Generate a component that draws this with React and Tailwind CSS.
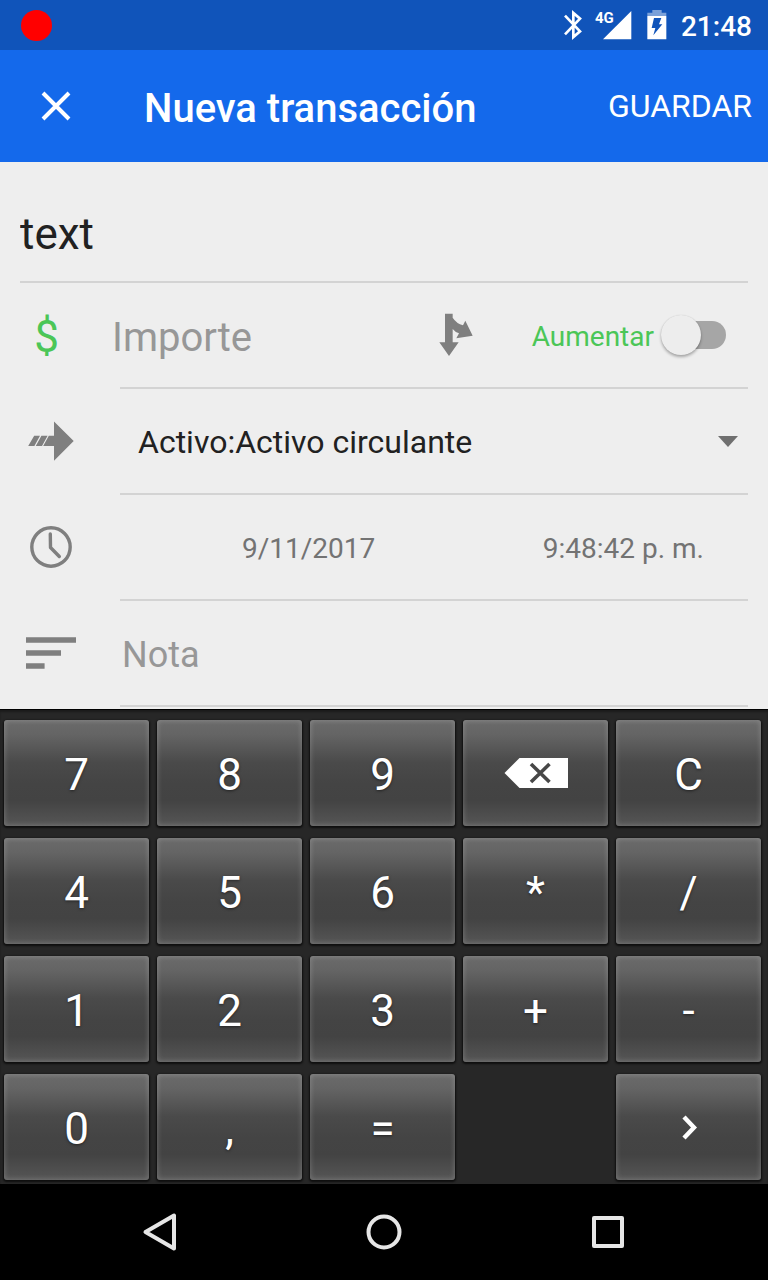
import React, { useState } from "react";

const keys = [
  "7", "8", "9", "backspace", "C",
  "4", "5", "6", "*", "/",
  "1", "2", "3", "+", "-",
  "0", ",", "=", null, "next",
];

function StatusBar() {
  return (
    <header className="flex h-[50px] items-center bg-[#1054ba] pl-[21px] pr-4 text-white">
      <span className="size-[31px] rounded-full bg-[#ff0000]" />
      <div className="ml-auto flex items-center">
        <svg className="h-8 w-5" viewBox="70 27 60 96" fill="none" stroke="white" strokeWidth="8" aria-hidden="true">
          <path d="M76 47 L121 94 L101 111 V39 L121 56 L76 103" />
        </svg>
        <div className="relative ml-3 h-8 w-[38px]">
          <svg className="h-8 w-[38px]" viewBox="165 27 114 96" fill="white" aria-hidden="true">
            <path d="M189 118 L274 33 V118 Z" />
          </svg>
          <span className="absolute left-0 top-0 text-[15px] font-bold leading-[18px]">4G</span>
        </div>
        <svg className="ml-3 h-8 w-6" viewBox="317 27 72 96" fill="white" aria-hidden="true">
          <path d="M339 30 H367 V38 H381 V48 H324 V38 H339 Z" opacity="0.45" />
          <path fillRule="evenodd" d="M324 48 H381 V118 H324 Z M344 54 H366 L359 73 H369 L342 106 L348 84 H337 Z" />
        </svg>
        <time className="ml-3 pt-1 text-[28px] font-medium leading-8">21:48</time>
      </div>
    </header>
  );
}

function Toolbar() {
  return (
    <div className="flex h-28 items-center bg-[#1469eb] pl-9 pr-4 text-white">
      <button type="button" aria-label="Cerrar">
        <svg className="size-10" viewBox="0 0 40 40" fill="none" stroke="white" strokeWidth="4" aria-hidden="true">
          <path d="M7 7 L33 33 M33 7 L7 33" />
        </svg>
      </button>
      <h1 className="ml-17 pt-1.5 text-[40px] font-medium leading-12">Nueva transacción</h1>
      <button type="button" className="ml-auto text-[32px] leading-10">GUARDAR</button>
    </div>
  );
}

function Row({ icon, children }) {
  return (
    <div>
      <div className="flex h-26 items-center">
        <div className="w-23 shrink-0">{icon}</div>
        {children}
      </div>
      <div className="ml-25 h-0.5 bg-[#d3d3d3]" />
    </div>
  );
}

function ArrowIcon() {
  return (
    <svg className="size-16" viewBox="0 0 64 64" fill="#7f7f7f" aria-hidden="true">
      <path d="M8.2 37 L14.2 26.7 H20 L14.4 37 Z M15.8 37 L21.4 26.7 H27.6 L22 37 Z M23.2 37 L28.8 26.7 H34 V12.5 L53.7 32 L34 51.7 V37 Z" />
    </svg>
  );
}

function ClockIcon() {
  return (
    <svg className="size-16" viewBox="0 0 64 64" fill="none" stroke="#7f7f7f" strokeWidth="3.4" aria-hidden="true">
      <circle cx="31" cy="32" r="19.2" />
      <path d="M30.3 19 L30.5 32.5 L39.3 41.5" strokeLinecap="round" strokeLinejoin="round" />
    </svg>
  );
}

function NoteIcon() {
  return (
    <svg className="size-16" viewBox="0 0 64 64" fill="#7f7f7f" aria-hidden="true">
      <path d="M6 16.3 H56 V21.7 H6 Z M6 29.3 H41 V34.7 H6 Z M6 42.3 H24.6 V47.7 H6 Z" />
    </svg>
  );
}

function SplitIcon() {
  return (
    <svg className="h-12 w-10" viewBox="0 0 120 144" fill="#7f7f7f" aria-hidden="true">
      <path d="M21 8 H44 V20 Q56 38 75 43 L82 29 L104 74 L55 82 L63 67 Q52 64 44 54 V94 H62 L33 135 L4 94 H21 Z" />
    </svg>
  );
}

function TransactionForm() {
  const [title, setTitle] = useState("text");
  return (
    <form className="bg-[#eeeeee] px-5 pb-0.5" onSubmit={(e) => e.preventDefault()}>
      <input
        aria-label="Descripción"
        className="block h-[121px] w-full border-b-2 border-[#d3d3d3] pt-6 text-[44px] text-[#212121] outline-none"
        value={title}
        onChange={(e) => setTitle(e.target.value)}
      />
      <Row icon={<span className="flex w-[53px] justify-center pt-1 text-[44px] leading-12 text-[#4bc657]">$</span>}>
        <input
          aria-label="Importe"
          placeholder="Importe"
          className="min-w-0 flex-1 pt-1.5 text-[40px] text-[#212121] outline-none placeholder:text-[#979797]"
        />
        <button type="button" aria-label="Dividir" className="mr-[54px]">
          <SplitIcon />
        </button>
        <label className="mr-[22px] flex items-center gap-4">
          <span className="pt-1 text-[28px] leading-8 text-[#4bc657]">Aumentar</span>
          <input
            type="checkbox"
            role="switch"
            className="relative h-7 w-14 appearance-none rounded-full bg-[#a6a6a6] before:absolute before:-left-[9px] before:-top-1.5 before:size-10 before:rounded-full before:bg-[#ededed] before:shadow-[0_2px_3px_rgba(0,0,0,0.3),0_0_1px_rgba(0,0,0,0.15)] checked:bg-[#a5e2ab] checked:before:left-6"
          />
        </label>
      </Row>
      <Row icon={<ArrowIcon />}>
        <div className="relative flex-1">
          <select aria-label="Cuenta" className="w-full appearance-none bg-transparent pl-[26px] pt-0.5 text-[32px] text-[#212121] outline-none">
            <option>Activo:Activo circulante</option>
          </select>
          <svg className="pointer-events-none absolute right-2.5 top-5 h-3 w-5" viewBox="0 0 20 12" fill="#6f6f6f" aria-hidden="true">
            <path d="M0 0 H20 L10 11 Z" />
          </svg>
        </div>
      </Row>
      <Row icon={<ClockIcon />}>
        <div className="flex flex-1 justify-between pl-[130px] pr-11 pt-1 text-[28px] leading-8 text-[#737373]">
          <button type="button">9/11/2017</button>
          <button type="button">9:48:42 p. m.</button>
        </div>
      </Row>
      <Row icon={<NoteIcon />}>
        <input
          aria-label="Nota"
          placeholder="Nota"
          className="min-w-0 flex-1 pl-2.5 pt-1 text-[36px] text-[#212121] outline-none placeholder:text-[#979797]"
        />
      </Row>
    </form>
  );
}

function KeyFace({ value }) {
  if (value === "backspace") {
    return (
      <svg className="h-9 w-16" viewBox="0 0 64 36" aria-hidden="true">
        <path d="M0.5 16 L15.5 1 H64 V31 H15.5 Z" fill="white" />
        <path d="M27 7 L45.5 25 M45.5 7 L27 25" stroke="#474747" strokeWidth="3.6" />
      </svg>
    );
  }
  if (value === "next") {
    return (
      <svg className="h-9 w-6" viewBox="0 0 24 36" fill="none" stroke="white" strokeWidth="4.4" aria-hidden="true">
        <path d="M7 6 L17 16.5 L7 27" />
      </svg>
    );
  }
  return value;
}

function Keypad() {
  return (
    <div className="grid grid-cols-5 gap-x-2 gap-y-3 border-t border-black bg-[#272727] pb-1 pl-1 pr-[7px] pt-2.5 shadow-[inset_0_2px_2px_rgba(0,0,0,0.3)]">
      {keys.map((k, i) =>
        k === null ? (
          <span key={i} />
        ) : (
          <button
            key={i}
            type="button"
            aria-label={k === "backspace" ? "Borrar" : k === "next" ? "Siguiente" : undefined}
            className="flex h-[106px] items-center justify-center rounded-[3px] bg-[linear-gradient(#6b6b6b_0%,#646464_14%,#4a4a4a_40%,#444444_60%,#434343_76%,#565656_100%)] pt-1 text-[44px] text-white shadow-[0_1px_2px_1px_rgba(0,0,0,0.65),inset_0_0_5px_1px_rgba(255,255,255,0.18)] [text-shadow:0_1px_3px_rgba(0,0,0,0.5)]"
          >
            <KeyFace value={k} />
          </button>
        )
      )}
    </div>
  );
}

function NavBar() {
  return (
    <nav className="flex h-24 items-center justify-center gap-[184px] bg-black">
      <button type="button" aria-label="Atrás">
        <svg className="size-10" viewBox="0 0 40 40" fill="none" stroke="#e6e6e6" strokeWidth="4" strokeLinejoin="round" aria-hidden="true">
          <path d="M5.5 20 L34 3.5 V36.5 Z" />
        </svg>
      </button>
      <button type="button" aria-label="Inicio">
        <svg className="size-10" viewBox="0 0 40 40" fill="none" stroke="#e6e6e6" strokeWidth="4" aria-hidden="true">
          <circle cx="20" cy="20" r="15.5" />
        </svg>
      </button>
      <button type="button" aria-label="Recientes">
        <svg className="size-10" viewBox="0 0 40 40" fill="none" stroke="#e6e6e6" strokeWidth="4" strokeLinejoin="round" aria-hidden="true">
          <rect x="6" y="6" width="28" height="28" />
        </svg>
      </button>
    </nav>
  );
}

export default function App() {
  return (
    <div className="font-[Roboto,sans-serif]">
      <StatusBar />
      <Toolbar />
      <TransactionForm />
      <Keypad />
      <NavBar />
    </div>
  );
}
